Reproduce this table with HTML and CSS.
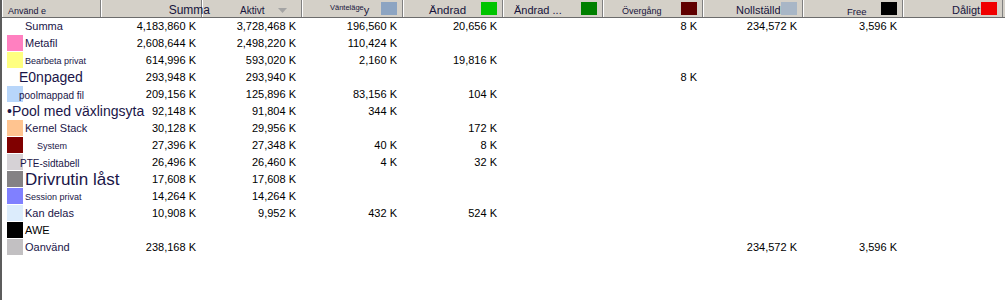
FILE: index.html
```html
<!DOCTYPE html>
<html lang="sv">
<head>
<meta charset="utf-8">
<title>Minne</title>
<link rel="stylesheet" href="styles.css">
</head>
<body>
<div class="view">
  <div class="cols head">
    <div class="hc"><span class="ht h-name">Använd e</span></div>
    <div class="hc hc-right"><span class="ht h-sum">Summa</span></div>
    <div class="hc"><span class="ht h-act">Aktivt</span><svg class="sort" width="9" height="5" viewBox="0 0 9 5"><path d="M0 0H9L4.5 5Z" fill="#a4a4a4"/></svg></div>
    <div class="hc"><span class="ht h-wait">Vänteläge</span><span class="ht h-y">y</span><span class="hsw" style="background:#8ca4c2"></span></div>
    <div class="hc"><span class="ht h-mod">Ändrad</span><span class="hsw" style="background:#00c400"></span></div>
    <div class="hc"><span class="ht h-mod2">Ändrad ...</span><span class="hsw" style="background:#008000"></span></div>
    <div class="hc"><span class="ht h-trans">Övergång</span><span class="hsw" style="background:#600000"></span></div>
    <div class="hc"><span class="ht h-zero">Nollställd</span><span class="hsw" style="background:#a8b6c6"></span></div>
    <div class="hc"><span class="ht h-free">Free</span><span class="hsw" style="background:#000000"></span></div>
    <div class="hc"><span class="ht h-bad">Dåligt</span><span class="hsw" style="background:#f00000"></span></div>
  </div>

  <div class="cols row">
    <div class="lab"><span class="lt l-summa">Summa</span></div>
    <div class="num">4,183,860 K</div><div class="num">3,728,468 K</div><div class="num">196,560 K</div><div class="num">20,656 K</div><div class="num"></div><div class="num">8 K</div><div class="num">234,572 K</div><div class="num">3,596 K</div><div class="num"></div>
  </div>
  <div class="cols row">
    <div class="lab"><span class="sw" style="background:#ff80c0"></span><span class="lt s11">Metafil</span></div>
    <div class="num">2,608,644 K</div><div class="num">2,498,220 K</div><div class="num">110,424 K</div><div class="num"></div><div class="num"></div><div class="num"></div><div class="num"></div><div class="num"></div><div class="num"></div>
  </div>
  <div class="cols row">
    <div class="lab"><span class="sw" style="background:#ffff80"></span><span class="lt s9">Bearbeta privat</span></div>
    <div class="num">614,996 K</div><div class="num">593,020 K</div><div class="num">2,160 K</div><div class="num">19,816 K</div><div class="num"></div><div class="num"></div><div class="num"></div><div class="num"></div><div class="num"></div>
  </div>
  <div class="cols row">
    <div class="lab"><span class="lt l-e0">E0npaged</span></div>
    <div class="num">293,948 K</div><div class="num">293,940 K</div><div class="num"></div><div class="num"></div><div class="num"></div><div class="num">8 K</div><div class="num"></div><div class="num"></div><div class="num"></div>
  </div>
  <div class="cols row">
    <div class="lab"><span class="sw" style="background:#b8d6fa"></span><span class="lt s10 l-pool-map">poolmappad fil</span></div>
    <div class="num">209,156 K</div><div class="num">125,896 K</div><div class="num">83,156 K</div><div class="num">104 K</div><div class="num"></div><div class="num"></div><div class="num"></div><div class="num"></div><div class="num"></div>
  </div>
  <div class="cols row">
    <div class="lab"><span class="lt l-pool">•Pool med växlingsyta</span></div>
    <div class="num">92,148 K</div><div class="num">91,804 K</div><div class="num">344 K</div><div class="num"></div><div class="num"></div><div class="num"></div><div class="num"></div><div class="num"></div><div class="num"></div>
  </div>
  <div class="cols row">
    <div class="lab"><span class="sw" style="background:#ffc490"></span><span class="lt s11">Kernel Stack</span></div>
    <div class="num">30,128 K</div><div class="num">29,956 K</div><div class="num"></div><div class="num">172 K</div><div class="num"></div><div class="num"></div><div class="num"></div><div class="num"></div><div class="num"></div>
  </div>
  <div class="cols row">
    <div class="lab"><span class="sw" style="background:#800000"></span><span class="lt s9 l-system">System</span></div>
    <div class="num">27,396 K</div><div class="num">27,348 K</div><div class="num">40 K</div><div class="num">8 K</div><div class="num"></div><div class="num"></div><div class="num"></div><div class="num"></div><div class="num"></div>
  </div>
  <div class="cols row">
    <div class="lab"><span class="sw" style="background:#d6d2d6"></span><span class="lt s10 l-pte">PTE-sidtabell</span></div>
    <div class="num">26,496 K</div><div class="num">26,460 K</div><div class="num">4 K</div><div class="num">32 K</div><div class="num"></div><div class="num"></div><div class="num"></div><div class="num"></div><div class="num"></div>
  </div>
  <div class="cols row">
    <div class="lab"><span class="sw" style="background:#848284"></span><span class="lt l-driver">Drivrutin låst</span></div>
    <div class="num">17,608 K</div><div class="num">17,608 K</div><div class="num"></div><div class="num"></div><div class="num"></div><div class="num"></div><div class="num"></div><div class="num"></div><div class="num"></div>
  </div>
  <div class="cols row">
    <div class="lab"><span class="sw" style="background:#8080ff"></span><span class="lt s9">Session privat</span></div>
    <div class="num">14,264 K</div><div class="num">14,264 K</div><div class="num"></div><div class="num"></div><div class="num"></div><div class="num"></div><div class="num"></div><div class="num"></div><div class="num"></div>
  </div>
  <div class="cols row">
    <div class="lab"><span class="sw" style="background:#dcecfc"></span><span class="lt s11">Kan delas</span></div>
    <div class="num">10,908 K</div><div class="num">9,952 K</div><div class="num">432 K</div><div class="num">524 K</div><div class="num"></div><div class="num"></div><div class="num"></div><div class="num"></div><div class="num"></div>
  </div>
  <div class="cols row">
    <div class="lab"><span class="sw" style="background:#000000"></span><span class="lt s11 l-awe">AWE</span></div>
    <div class="num"></div><div class="num"></div><div class="num"></div><div class="num"></div><div class="num"></div><div class="num"></div><div class="num"></div><div class="num"></div><div class="num"></div>
  </div>
  <div class="cols row">
    <div class="lab"><span class="sw" style="background:#c2c0c2"></span><span class="lt s11">Oanvänd</span></div>
    <div class="num">238,168 K</div><div class="num"></div><div class="num"></div><div class="num"></div><div class="num"></div><div class="num"></div><div class="num">234,572 K</div><div class="num">3,596 K</div><div class="num"></div>
  </div>
</div>
</body>
</html>
```

FILE: styles.css
```css
* { box-sizing: border-box; }

html, body {
  margin: 0;
  background: #ffffff;
  font-family: "Liberation Sans", Arial, sans-serif;
}

.view {
  height: 300px;
  border-left: 2px solid #5c5c5c;
  overflow: hidden;
}

.cols {
  display: grid;
  grid-template-columns: 99px 101px 100px 101px 100px 100px 100px 100px 100px 100px;
}

/* ---------- header ---------- */
.head {
  height: 18px;
  background: #d4d0c8;
  border-bottom: 1px solid #6c6c6c;
}

.hc {
  display: flex;
  align-items: flex-end;
  height: 17px;
  border-left: 1px solid #ffffff;
  border-right: 1px solid #808080;
  padding-bottom: 1px;
  white-space: nowrap;
  color: #17143c;
}

.hc-right { justify-content: flex-end; }

.ht { line-height: 1; }

.h-name { font-size: 9px; margin-left: 5px; }
.h-sum { font-size: 12px; margin-right: -9px; position: relative; z-index: 1; }
.h-act { font-size: 10px; margin-left: 37px; }
.h-wait { font-size: 7.5px; margin-left: 27px; align-self: flex-start; margin-top: 4px; }
.h-y { font-size: 11px; }
.h-mod { font-size: 11.5px; margin-left: 25px; }
.h-mod2 { font-size: 11px; margin-left: 10px; }
.h-trans { font-size: 9px; margin-left: 18px; }
.h-zero { font-size: 11px; margin-left: 32px; }
.h-free { font-size: 9.5px; margin-left: 43px; }
.h-bad { font-size: 11px; margin-left: 48px; }

.sort {
  align-self: flex-start;
  margin-top: 8px;
  margin-left: 14px;
}

.hsw {
  width: 16px;
  height: 13px;
  align-self: flex-start;
  margin-top: 2px;
  margin-left: auto;
  margin-right: 5px;
  flex: none;
}

/* ---------- rows ---------- */
.row { height: 17px; }

.lab {
  display: flex;
  align-items: center;
  height: 17px;
  padding-left: 5px;
  white-space: nowrap;
  color: #1a1548;
}

.sw {
  width: 16px;
  height: 16px;
  flex: none;
  align-self: flex-start;
}

.lt {
  margin-left: 2px;
  line-height: 17px;
}

.s9 { font-size: 9px; padding-top: 2px; }
.s10 { font-size: 10px; padding-top: 2px; }
.s11 { font-size: 11px; }

.l-summa { font-size: 11px; margin-left: 18px; }
.l-e0 { font-size: 14px; margin-left: 12px; }
.l-pool-map { margin-left: -4px; }
.l-pool { font-size: 14px; margin-left: 0; }
.l-system { margin-left: 14px; }
.l-pte { margin-left: -3px; }
.l-driver { font-size: 17px; }
.l-awe { color: #000000; }

.num {
  text-align: right;
  padding-right: 6px;
  font-size: 11px;
  line-height: 17px;
  color: #000000;
  white-space: nowrap;
}
```
